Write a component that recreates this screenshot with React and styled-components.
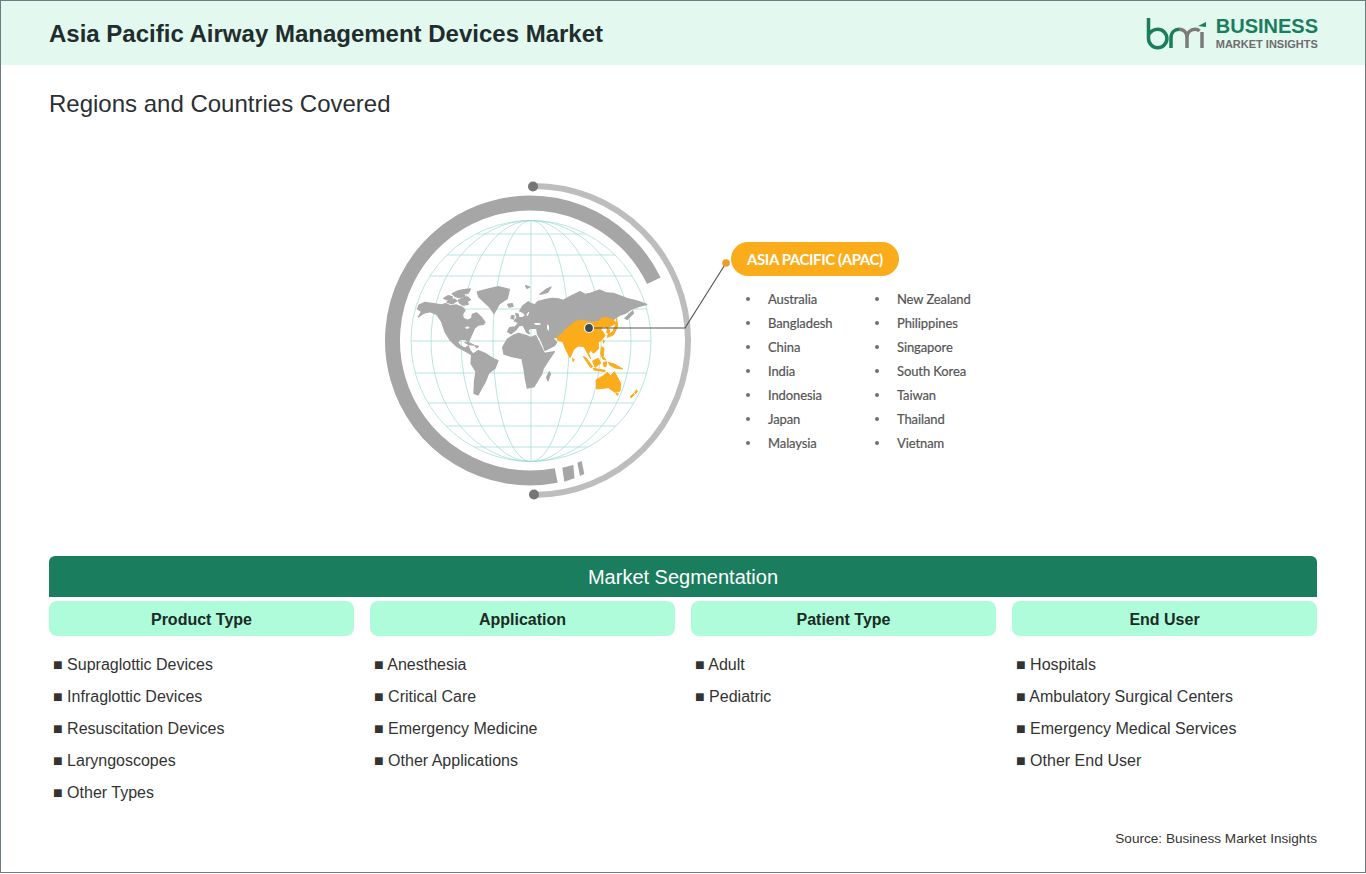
import React from 'react';
import styled, { createGlobalStyle } from 'styled-components';

const GlobalStyle = createGlobalStyle`
  html, body {
    margin: 0;
    padding: 0;
    background: #fff;
  }
  body {
    font-family: "Liberation Sans", Arial, sans-serif;
  }
`;

const segments = [
  { title: 'Product Type', items: ['Supraglottic Devices', 'Infraglottic Devices', 'Resuscitation Devices', 'Laryngoscopes', 'Other Types'] },
  { title: 'Application', items: ['Anesthesia', 'Critical Care', 'Emergency Medicine', 'Other Applications'] },
  { title: 'Patient Type', items: ['Adult', 'Pediatric'] },
  { title: 'End User', items: ['Hospitals', 'Ambulatory Surgical Centers', 'Emergency Medical Services', 'Other End User'] },
];

const leftCountries = ['Australia', 'Bangladesh', 'China', 'India', 'Indonesia', 'Japan', 'Malaysia'];
const rightCountries = ['New Zealand', 'Philippines', 'Singapore', 'South Korea', 'Taiwan', 'Thailand', 'Vietnam'];

const Logo = () => (
  <LogoMark width="62" height="34" viewBox="0 0 62 34" fill="none">
    <path d="M2.5 1 V21.5 A9.2 9.2 0 1 0 11.7 12.3 C7.5 12.3 4.5 14.5 2.5 18" stroke="#1a7d5e" strokeWidth="3.5" />
    <path d="M25 31 V21 C25 15 29 12.3 33 12.3" stroke="#1a7d5e" strokeWidth="3.5" />
    <path d="M33 12.3 C38 12.3 41 16 41 21 V31 M41 21 C41 15 45 12.3 49 12.3 C51 12.3 52.5 13 53.5 14" stroke="#7b7b7b" strokeWidth="3.5" />
    <path d="M56 15 V31" stroke="#7b7b7b" strokeWidth="3.5" />
    <path d="M52 9 L60 5 V10 Z" fill="#1a7d5e" />
  </LogoMark>
);

// traced over a 3x crop of the map, each group has its own origin
const americas = [
  'M12,60 L30,52 L55,56 L80,60 L92,56 L105,62 L125,60 L140,66 L150,76 L142,88 L145,100 L158,106 L170,100 L172,88 L185,84 L198,96 L210,112 L205,118 L190,120 L178,130 L172,145 L165,160 L160,170 L150,162 L135,163 L128,172 L135,182 L150,190 L160,183 L164,195 L176,210 L168,208 L150,198 L125,184 L105,165 L90,140 L80,110 L65,88 L45,80 L25,85 L10,96 L20,80 L8,72 Z',
  'M86,40 L100,32 L112,36 L106,44 L118,42 L126,48 L112,56 L96,52 L102,46 Z',
  'M112,26 L128,18 L146,14 L166,12 L160,24 L146,26 L150,34 L132,38 L120,34 Z',
  'M130,46 L146,38 L158,36 L166,44 L156,50 L160,58 L142,60 L134,54 Z',
  'M150,172 L164,174 L176,180 L162,179 Z',
  'M180,182 L190,184 L186,188 Z',
];

const southGrey = [
  'M322,366 L350,358 L385,350 L418,358 L412,385 L388,402 L372,430 L358,410 L342,395 L326,380 Z',
  'M305,555 L325,542 L345,550 L368,565 L384,572 L375,595 L356,610 L346,635 L332,660 L324,675 L312,670 L314,630 L318,605 L303,580 Z',
  'M398,532 L412,508 L430,496 L445,490 L470,497 L482,503 L497,497 L523,550 L553,545 L535,572 L520,595 L515,612 L505,628 L492,650 L472,654 L466,625 L463,602 L456,566 L426,560 L402,552 Z',
  'M530,622 L538,605 L541,612 L534,632 Z',
];

const eurasia = [
  'M38,140 L44,128 L60,126 L70,115 L62,108 L72,98 L84,98 L92,90 L84,82 L74,78 L84,62 L100,50 L108,56 L120,60 L128,50 L150,44 L170,40 L190,42 L205,46 L225,35 L255,20 L270,28 L285,25 L315,15 L335,24 L355,25 L395,40 L425,48 L455,58 L430,65 L410,72 L390,85 L375,90 L360,100 L355,105 L325,97 L310,110 L280,110 L255,105 L235,120 L225,135 L210,150 L190,158 L175,158 L165,150 L185,172 L178,182 L150,196 L138,165 L128,148 L125,130 L105,130 L100,136 L92,124 L103,146 L95,142 L84,120 L72,122 L62,135 L48,146 Z',
  'M62,85 L70,88 L72,104 L58,108 L66,98 Z',
  'M50,92 L57,92 L56,102 L48,100 Z',
  'M38,58 L52,56 L54,64 L42,66 Z',
  'M92,2 L104,6 L96,10 Z',
  'M135,28 L155,12 L168,6 L158,22 Z',
];

const inlandSeas = [
  'M116,114 L134,114 L138,119 L122,120 Z',
  'M156,118 L162,122 L162,138 L156,132 Z',
  'M94,90 L100,80 L103,82 L98,94 Z',
];

const lakes = ['M150,127 L160,124 L164,129 L154,132 Z'];

const eastAsiaGrey = ['M165,100 L188,78 L190,85 L172,103 Z'];

const eastAsia = [
  'M-38,155 L-25,148 L-15,135 L0,122 L12,112 L30,105 L55,110 L70,112 L85,108 L98,97 L112,98 L130,105 L138,115 L125,122 L112,128 L100,125 L92,132 L100,142 L105,152 L95,165 L85,172 L85,192 L70,205 L62,195 L56,205 L62,222 L50,200 L42,185 L25,183 L12,192 L0,218 L-12,195 L-22,170 L-38,165 Z',
  'M140,100 L143,125 L130,150 L112,157 L113,150 L128,140 L135,125 Z',
  'M112,130 L120,135 L116,148 L110,142 Z',
  'M100,165 L104,168 L100,175 Z',
  'M95,185 L102,190 L100,215 L108,225 L98,222 L92,205 Z',
  'M40,215 L48,218 L68,245 L62,248 Z',
  'M68,228 L85,220 L92,235 L75,247 Z',
  'M70,250 L105,256 L105,260 L72,255 Z',
  'M100,232 L110,230 L108,245 L102,245 Z',
  'M115,232 L135,238 L158,252 L135,249 L120,241 Z',
  'M78,285 L100,272 L112,262 L122,272 L133,260 L152,295 L150,318 L135,322 L115,308 L80,312 Z',
  'M138,325 L145,325 L142,332 Z',
  'M180,336 L190,326 L193,328 L184,338 Z',
  'M194,322 L200,314 L202,320 L197,326 Z',
  'M8,220 L13,224 L9,230 Z',
];

const Land = ({ x, y, paths, fill, grow = 0 }) => (
  <g
    transform={`translate(${x} ${y}) scale(0.33333)`}
    fill={fill}
    stroke={grow ? fill : 'none'}
    strokeWidth={grow}
    strokeLinejoin="round"
  >
    {paths.map((d) => (
      <path key={d} d={d} />
    ))}
  </g>
);

const GlobeFigure = () => {
  const parallels = [-107, -86, -65, -32, 0, 32, 62, 85, 106];
  const meridians = [120, 100, 70, 38];
  return (
    <svg width="361" height="340" viewBox="370 170 361 340" fill="none">
      <defs>
        <clipPath id="globeClip">
          <circle cx="531" cy="341" r="120" />
        </clipPath>
      </defs>
      {/* grid lines */}
      <g stroke="#9fd8d3" strokeWidth="0.7">
        {meridians.map((rx) => (
          <ellipse key={rx} cx="531" cy="341" rx={rx} ry="120.5" />
        ))}
        <path d="M531 220 V461" />
        <g clipPath="url(#globeClip)">
          {parallels.map((dy) => (
            <path key={dy} d={`M405 ${341 + dy} H657`} />
          ))}
        </g>
      </g>
      {/* rings */}
      <path d="M653.8 280.7 A137.5 137.5 0 1 0 556.2 475.5" stroke="#a6a6a6" strokeWidth="15" />
      <path d="M562.3 467.7 L573.3 465 L574.5 478.3 L564.3 481.7 Z" fill="#a6a6a6" />
      <path d="M577.3 462.7 L581.7 461 L584.3 474 L580 476 Z" fill="#a6a6a6" />
      <path d="M533 186 A154.5 154.5 0 0 1 534 495" stroke="#bdbdbd" strokeWidth="6" />
      <circle cx="533" cy="186.5" r="5" fill="#757575" />
      <circle cx="534" cy="494.5" r="5" fill="#757575" />
      {/* continents */}
      <Land x={370} y={170} paths={southGrey} fill="#a8a8a8" grow={4} />
      <Land x={415} y={285} paths={americas} fill="#a8a8a8" grow={4} />
      <Land x={415} y={285} paths={lakes} fill="#fff" />
      <Land x={495} y={285} paths={eurasia} fill="#a8a8a8" grow={4} />
      <Land x={495} y={285} paths={inlandSeas} fill="#fff" />
      <Land x={570} y={285} paths={eastAsiaGrey} fill="#a8a8a8" grow={4} />
      <Land x={570} y={285} paths={eastAsia} fill="#fbac1b" grow={3} />
      {/* pointer */}
      <path d="M589 328 H685 L726 263" stroke="#555" strokeWidth="1.2" />
      <circle cx="589" cy="328" r="4.5" fill="#3c4a54" stroke="#fff" strokeWidth="1.2" />
      <circle cx="726" cy="263" r="3.8" fill="#f09a28" />
    </svg>
  );
};

export default function App() {
  return (
    <>
      <GlobalStyle />
      <Page>
        <Header>
          <Title>Asia Pacific Airway Management Devices Market</Title>
          <Brand>
            <Logo />
            <BrandText>
              <BrandName>BUSINESS</BrandName>
              <BrandSub>MARKET INSIGHTS</BrandSub>
            </BrandText>
          </Brand>
        </Header>
        <Content>
          <SubTitle>Regions and Countries Covered</SubTitle>
          <MapRow>
            <GlobeFigure />
            <RegionPanel>
              <RegionPill>ASIA PACIFIC (APAC)</RegionPill>
              <CountryColumns>
                <CountryList>
                  {leftCountries.map((c) => (
                    <Country key={c}>{c}</Country>
                  ))}
                </CountryList>
                <CountryList>
                  {rightCountries.map((c) => (
                    <Country key={c}>{c}</Country>
                  ))}
                </CountryList>
              </CountryColumns>
            </RegionPanel>
          </MapRow>
          <SegmentBar>Market Segmentation</SegmentBar>
          <SegmentGrid>
            {segments.map((s) => (
              <SegmentColumn key={s.title}>
                <SegmentHead>{s.title}</SegmentHead>
                <SegmentList>
                  {s.items.map((item) => (
                    <SegmentItem key={item}>■ {item}</SegmentItem>
                  ))}
                </SegmentList>
              </SegmentColumn>
            ))}
          </SegmentGrid>
          <Source>Source: Business Market Insights</Source>
        </Content>
      </Page>
    </>
  );
}

const Page = styled.div`
  box-sizing: border-box;
  width: 1366px;
  height: 873px;
  border: 1px solid #6f7b82;
  background: #fff;
  overflow: hidden;
`;

const Header = styled.header`
  box-sizing: border-box;
  height: 64px;
  padding: 2px 47px 0 48px;
  display: flex;
  align-items: center;
  justify-content: space-between;
  background: #e3f8ef;
`;

const Title = styled.h1`
  margin: 0;
  font-size: 24px;
  font-weight: 700;
  color: #212d2d;
`;

const Brand = styled.div`
  display: flex;
  align-items: center;
  gap: 8px;
`;

const LogoMark = styled.svg`
  display: block;
`;

const BrandText = styled.div`
  display: flex;
  flex-direction: column;
  margin-bottom: 2px;
`;

const BrandName = styled.span`
  font-size: 20px;
  line-height: 21px;
  font-weight: 700;
  color: #1a7d5e;
`;

const BrandSub = styled.span`
  margin-top: 1px;
  font-size: 11px;
  line-height: 12px;
  font-weight: 700;
  color: #6d6d6d;
`;

const Content = styled.main`
  padding: 0 48px;
`;

const SubTitle = styled.h2`
  margin: 0;
  padding-top: 25px;
  font-size: 24px;
  line-height: 28px;
  font-weight: 400;
  color: #2b2f33;
`;

const MapRow = styled.section`
  display: flex;
  align-items: flex-start;
  height: 438px;
  padding: 52px 0 0 321px;
  box-sizing: border-box;
`;

const RegionPanel = styled.div`
  padding-top: 72px;
`;

const RegionPill = styled.div`
  box-sizing: border-box;
  width: 168px;
  height: 34px;
  padding-left: 16px;
  display: flex;
  align-items: center;
  border-radius: 17px;
  background: #fbac1b;
  color: #fff;
  font-family: Lato, sans-serif;
  font-size: 15px;
  font-weight: 700;
  letter-spacing: -0.4px;
  white-space: nowrap;
`;

const CountryColumns = styled.div`
  display: grid;
  grid-template-columns: 129px 100px;
  padding: 11px 0 0 15px;
`;

const CountryList = styled.ul`
  margin: 0;
  padding: 0;
  list-style: none;
`;

const Country = styled.li`
  position: relative;
  height: 24px;
  padding-left: 22px;
  font-family: Lato, sans-serif;
  font-size: 13px;
  line-height: 24px;
  letter-spacing: -0.1px;
  color: #555;
  -webkit-text-stroke: 0.2px #555;
  white-space: nowrap;

  &::before {
    content: '';
    position: absolute;
    left: 0;
    top: 10px;
    width: 4px;
    height: 4px;
    border-radius: 50%;
    background: #707070;
  }
`;

const SegmentBar = styled.div`
  box-sizing: border-box;
  height: 41px;
  padding-top: 2px;
  display: flex;
  align-items: center;
  justify-content: center;
  border-radius: 6px 6px 0 0;
  background: #1a7d5e;
  color: #fff;
  font-size: 20px;
`;

const SegmentGrid = styled.div`
  display: grid;
  grid-template-columns: repeat(4, 305px);
  column-gap: 16px;
  padding-top: 4px;
`;

const SegmentColumn = styled.div`
  display: flex;
  flex-direction: column;
`;

const SegmentHead = styled.div`
  box-sizing: border-box;
  height: 35px;
  padding-top: 2px;
  display: flex;
  align-items: center;
  justify-content: center;
  border-radius: 8px;
  background: #aefcd9;
  color: #1b2b26;
  font-size: 16px;
  font-weight: 700;
`;

const SegmentList = styled.ul`
  margin: 0;
  padding: 13px 0 0 4px;
  list-style: none;
  height: 176px;
  box-sizing: border-box;
`;

const SegmentItem = styled.li`
  height: 32px;
  font-size: 16px;
  line-height: 32px;
  color: #333;
`;

const Source = styled.div`
  text-align: right;
  padding-top: 17px;
  font-size: 13.6px;
  line-height: 20px;
  color: #333;
`;
